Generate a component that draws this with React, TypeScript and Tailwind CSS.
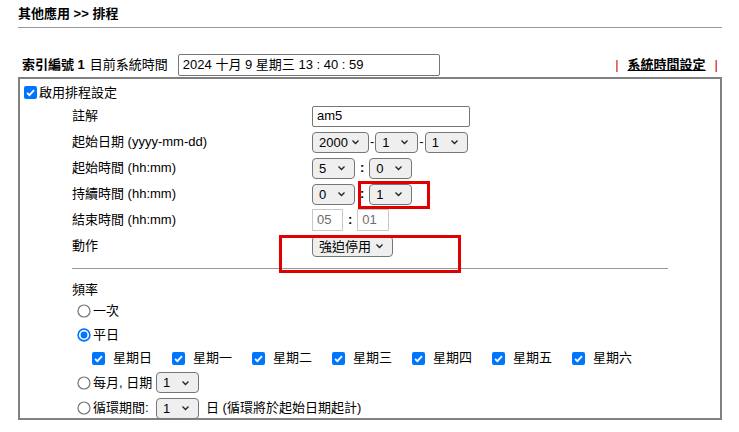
import { ReactNode } from 'react';

const Chevron = () => (
   <svg width="9" height="6" viewBox="0 0 9 6" className="shrink-0">
      <path d="M1.5 1.5l3 3 3-3" fill="none" stroke="#222" strokeWidth="1.3" />
   </svg>
);

// 灰底下拉選單 (Chrome 預設樣式)
const Select = ({ value, w }: { value: string; w: string }) => (
   <span
      className={`${w} h-[21px] inline-flex items-center justify-between pl-[6px] pr-[8px] border border-[#767676] rounded-[4px] bg-[#efefef] leading-none`}
   >
      <span>{value}</span>
      <Chevron />
   </span>
);

const Check = () => (
   <svg width="13" height="13" viewBox="0 0 13 13" className="shrink-0">
      <rect x="0" y="0" width="13" height="13" rx="2" fill="#0075ff" />
      <path d="M3 6.8l2.4 2.3L10 4.2" fill="none" stroke="#fff" strokeWidth="1.8" />
   </svg>
);

const Radio = ({ on = false }: { on?: boolean }) => (
   <svg width="14" height="14" viewBox="0 0 14 14" className="shrink-0">
      {on ? (
         <>
            <circle cx="7" cy="7" r="5.9" fill="#fff" stroke="#0075ff" strokeWidth="1.6" />
            <circle cx="7" cy="7" r="3.4" fill="#0075ff" />
         </>
      ) : (
         <circle cx="7" cy="7" r="6" fill="#fff" stroke="#767676" strokeWidth="1.2" />
      )}
   </svg>
);

const Row = ({ label, children }: { label: string; children: ReactNode }) => (
   <div className="flex items-center h-[26px]">
      <span className="w-[240px] shrink-0">{label}</span>
      <div className="flex items-center">{children}</div>
   </div>
);

const days = ['星期日', '星期一', '星期二', '星期三', '星期四', '星期五', '星期六'];

export default function App() {
   return (
      <div className="relative w-[739px] h-[432px] bg-white text-black text-[13px] font-['Liberation_Sans','Noto_Sans_CJK_TC',sans-serif]">
         <div className="ml-[18px] w-[704px]">
            <div className="h-[28px] flex items-center border-b border-[#999] font-bold">
               其他應用 &gt;&gt; 排程
            </div>

            <div className="mt-[25px] h-[23px] flex items-center justify-between pl-[4px] pr-[4px]">
               <div className="flex items-center">
                  <span className="font-bold">索引編號 1</span>
                  <span className="ml-[5px]">目前系統時間</span>
                  <span className="ml-[10px] w-[262px] h-[22px] flex items-center pl-[4px] border border-[#767676] rounded-[2px]">
                     2024 十月 9 星期三 13 : 40 : 59
                  </span>
               </div>
               <div className="flex items-center gap-[9px] font-bold">
                  <span className="text-[#d00000] font-normal">|</span>
                  <span className="underline">系統時間設定</span>
                  <span className="text-[#d00000] font-normal">|</span>
               </div>
            </div>

            <div className="mt-[1px] h-[343px] border-2 border-[#808080]">
               <div className="h-[24px] flex items-center pt-[3px] pl-[4px] gap-[2px]">
                  <Check />
                  <span>啟用排程設定</span>
               </div>

               <div className="pl-[52px]">
                  <Row label="註解">
                     <span className="w-[158px] h-[21px] flex items-center pl-[4px] border border-[#767676] rounded-[2px]">
                        am5
                     </span>
                  </Row>
                  <Row label="起始日期 (yyyy-mm-dd)">
                     <Select value="2000" w="w-[57px]" />
                     <span className="mx-[1px]">-</span>
                     <Select value="1" w="w-[43px]" />
                     <span className="mx-[1px]">-</span>
                     <Select value="1" w="w-[43px]" />
                  </Row>
                  <Row label="起始時間 (hh:mm)">
                     <Select value="5" w="w-[43px]" />
                     <span className="mx-[5px] font-bold">:</span>
                     <Select value="0" w="w-[43px]" />
                  </Row>
                  <Row label="持續時間 (hh:mm)">
                     <Select value="0" w="w-[43px]" />
                     <span className="mx-[5px] font-bold">:</span>
                     <Select value="1" w="w-[43px]" />
                  </Row>
                  <Row label="結束時間 (hh:mm)">
                     <span className="w-[31px] h-[22px] flex items-center pl-[4px] border border-[#c8c8c8] text-[#6d6d6d]">
                        05
                     </span>
                     <span className="mx-[5px] font-bold">:</span>
                     <span className="w-[32px] h-[22px] flex items-center pl-[4px] border border-[#c8c8c8] text-[#6d6d6d]">
                        01
                     </span>
                  </Row>
                  <Row label="動作">
                     <Select value="強迫停用" w="w-[81px]" />
                  </Row>

                  <div className="mt-[9px] w-[596px] border-t border-[#999]" />

                  <div className="mt-[11px] h-[20px] flex items-center">頻率</div>
                  <div className="h-[22px] flex items-center pl-[5px] gap-[2px]">
                     <Radio />
                     <span>一次</span>
                  </div>
                  <div className="h-[25px] flex items-center pl-[5px] gap-[2px]">
                     <Radio on />
                     <span>平日</span>
                  </div>
                  <div className="h-[22px] flex items-center pl-[20px]">
                     {days.map((d) => (
                        <div key={d} className="w-[80px] flex items-center gap-[8px]">
                           <Check />
                           <span>{d}</span>
                        </div>
                     ))}
                  </div>
                  <div className="h-[27px] flex items-center pl-[5px] gap-[2px]">
                     <Radio />
                     <span className="w-[61px]">每月, 日期</span>
                     <Select value="1" w="w-[43px]" />
                  </div>
                  <div className="h-[24px] flex items-center pl-[5px] gap-[2px]">
                     <Radio />
                     <span className="w-[61px]">循環期間:</span>
                     <Select value="1" w="w-[43px]" />
                     <span className="ml-[5px]">日 (循環將於起始日期起計)</span>
                  </div>
               </div>
            </div>
         </div>

         {/* 紅框標示 */}
         <div className="absolute left-[358px] top-[181px] w-[72px] h-[28px] border-[3px] border-[#e00000] pointer-events-none" />
         <div className="absolute left-[279px] top-[235px] w-[182px] h-[38px] border-[3px] border-[#e00000] pointer-events-none" />
      </div>
   );
}
